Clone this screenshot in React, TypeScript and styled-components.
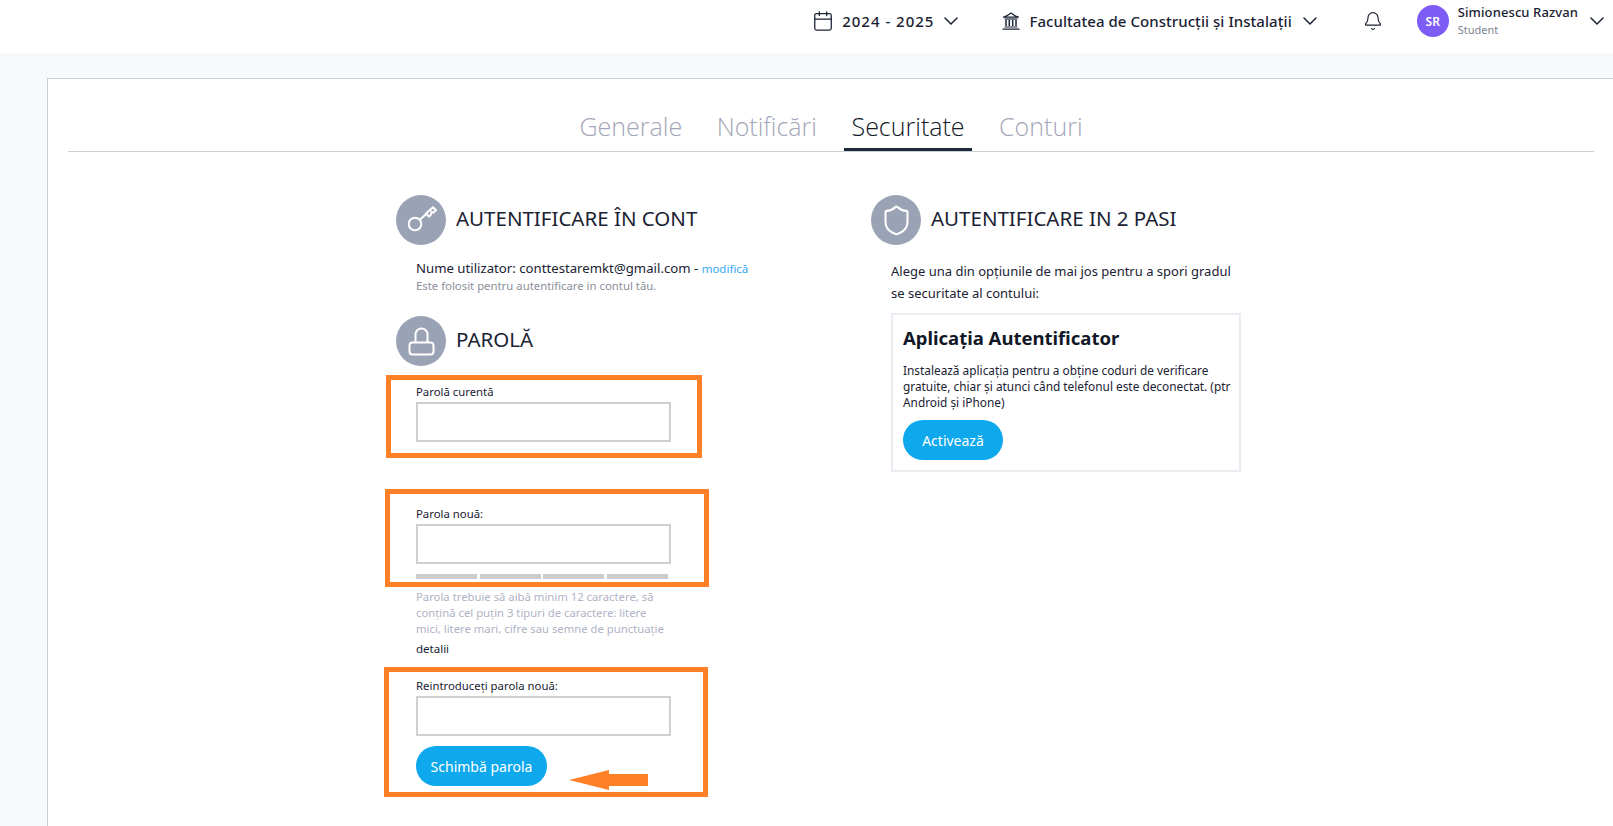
import React, { FunctionComponent } from 'react';
import styled, { createGlobalStyle } from 'styled-components';
import { Bell, Calendar, ChevronDown, Shield } from 'lucide-react';

const GlobalStyle = createGlobalStyle`
    html, body {
        margin: 0;
        padding: 0;
        background: #f8f9fb;
        font-family: "Noto Sans", "Open Sans", sans-serif;
        color: #1a2233;
    }
    * {
        box-sizing: border-box;
    }
`;

const Page = styled.div`
    height: 826px;
    overflow: hidden;
    display: flex;
    flex-direction: column;
`;

const Header = styled.header`
    height: 53px;
    flex-shrink: 0;
    background: #fff;
    display: flex;
    align-items: center;
    justify-content: flex-end;
    padding: 0 4px 11px 0;
`;

const HeaderItem = styled.div<{ $gap?: number; $spacing?: number; $textGap?: number }>`
    display: flex;
    align-items: center;
    gap: ${p => p.$textGap ?? 8}px;
    font-size: 15px;
    font-weight: 500;
    letter-spacing: ${p => p.$spacing ?? 0}px;
    color: #1a2233;
    margin-right: ${p => p.$gap ?? 0}px;
    white-space: nowrap;
`;

const ChevronGap = styled.span`
    display: flex;
    margin-left: -3px;
`;

const Avatar = styled.div`
    width: 32px;
    height: 32px;
    border-radius: 50%;
    background: #7c5cf5;
    color: #fff;
    font-size: 12px;
    font-weight: 600;
    display: flex;
    align-items: center;
    justify-content: center;
    margin-right: 9px;
`;

const UserBlock = styled.div`
    margin-right: 7px;
`;

const UserName = styled.div`
    font-size: 13px;
    font-weight: 500;
    letter-spacing: 0.1px;
    line-height: 18px;
`;

const UserRole = styled.div`
    font-size: 11px;
    line-height: 18px;
    color: #7d8494;
`;

const Panel = styled.main`
    flex: 1;
    margin: 25px 0 0 47px;
    background: #fff;
    border-top: 1px solid #ccced6;
    border-left: 1px solid #ccced6;
    padding: 0 19px 0 20px;
`;

const Tabs = styled.nav`
    height: 73px;
    border-bottom: 1px solid #ccced6;
    display: flex;
    justify-content: center;
    align-items: flex-end;
    gap: 19.5px;
    font-family: "Open Sans", sans-serif;
`;

const Tab = styled.div<{ $active?: boolean }>`
    height: 36px;
    padding: 0 7.5px;
    font-size: 25px;
    font-weight: 300;
    line-height: 22px;
    color: ${p => (p.$active ? '#111827' : '#a3a6b8')};
    border-bottom: 3px solid ${p => (p.$active ? '#1e293b' : 'transparent')};
`;

const Columns = styled.div`
    display: flex;
    padding: 43px 0 0 328px;
`;

const LeftColumn = styled.section`
    width: 475px;
`;

const RightColumn = styled.section`
    width: 372px;
`;

const SectionHead = styled.div<{ $top?: number }>`
    display: flex;
    align-items: center;
    gap: 10px;
    height: 50px;
    margin-top: ${p => p.$top ?? 0}px;
`;

const IconCircle = styled.div`
    width: 50px;
    height: 50px;
    border-radius: 50%;
    background: #9aa3b5;
    display: flex;
    align-items: center;
    justify-content: center;
    color: #fff;
`;

const SectionTitle = styled.h2`
    margin: 0;
    padding-bottom: 4px;
    font-size: 20.5px;
    font-weight: 400;
    color: #1a2233;
`;

const Indented = styled.div<{ $top?: number }>`
    margin: ${p => p.$top ?? 0}px 0 0 20px;
`;

const UserLine = styled.div`
    font-size: 13.2px;
    line-height: 20px;
`;

const ModifyLink = styled.span`
    font-size: 11.5px;
    line-height: 1;
    color: #36a9ee;
`;

const Muted = styled.div`
    font-size: 11.35px;
    line-height: 16px;
    color: #8b8f9a;
`;

const Field = styled.div<{ $top?: number }>`
    position: relative;
    width: 255px;
    margin-top: ${p => p.$top ?? 0}px;
`;

const Label = styled.label`
    display: block;
    height: 18px;
    font-size: 11.35px;
    line-height: 16px;
`;

const Input = styled.input`
    display: block;
    width: 255px;
    height: 40px;
    border: 2px solid #cfcfcf;
    background: #fff;
    outline: none;
`;

const StrengthBars = styled.div`
    display: flex;
    gap: 2.4px;
    margin-top: 10px;
    width: 252px;
`;

const StrengthBar = styled.div`
    flex: 1;
    height: 5px;
    background: #ccc;
`;

const HelpText = styled.p`
    width: 252px;
    margin: 10px 0 0;
    font-size: 11.3px;
    line-height: 16px;
    color: #b0b3c6;
`;

const DetailsLink = styled.div`
    margin-top: 4px;
    font-size: 11.5px;
    line-height: 16px;
`;

const PrimaryButton = styled.button<{ $width: number; $top?: number }>`
    display: block;
    width: ${p => p.$width}px;
    height: 40px;
    margin-top: ${p => p.$top ?? 0}px;
    border: none;
    border-radius: 20px;
    background: #0ea8ed;
    color: #fff;
    font-family: inherit;
    font-size: 14px;
    font-weight: 400;
`;

const Highlight = styled.div<{ $top: number; $left: number; $width: number; $height: number }>`
    position: absolute;
    top: ${p => p.$top}px;
    left: ${p => p.$left}px;
    width: ${p => p.$width}px;
    height: ${p => p.$height}px;
    border: 5px solid #ff8027;
    pointer-events: none;
`;

const ArrowMark = styled.svg`
    position: absolute;
    left: 153px;
    top: 92px;
`;

const Intro = styled.p`
    margin: 15px 0 0 20px;
    font-size: 13px;
    line-height: 22px;
    width: 350px;
`;

const Card = styled.div`
    width: 350px;
    height: 159px;
    margin: 9px 0 0 20px;
    border: 2px solid #ebebf2;
    padding: 10px 4px 10px 10px;
`;

const CardTitle = styled.h3`
    margin: 0;
    font-size: 18.5px;
    line-height: 26px;
    font-weight: 700;
    color: #111827;
`;

const CardText = styled.p`
    margin: 10.5px 0 10.5px;
    font-size: 11.85px;
    line-height: 16px;
`;

const KeyIcon: FunctionComponent = () => (
    <svg width="32" height="32" viewBox="0 0 32 32" fill="none" stroke="currentColor" strokeWidth="2">
        <circle cx="10" cy="20" r="6.3" />
        <path d="M14.7 15.8 L21 10.2" />
        <path d="M21 9.5 L28 3.2 L31 6.2 L28.2 8.8 L26.6 7.6 L25.8 10.8 L24 12.6 Z" strokeLinejoin="round" />
    </svg>
);

const LockIcon: FunctionComponent = () => (
    <svg width="30" height="32" viewBox="0 0 30 32" fill="none" stroke="currentColor" strokeWidth="2">
        <rect x="3.5" y="17.5" width="24" height="12" rx="3" />
        <path d="M9.5 17.5 V9.5 a6 6 0 0 1 12 0 V17.5" />
    </svg>
);

const BankIcon: FunctionComponent = () => (
    <svg width="18" height="18" viewBox="0 0 18 18" fill="none" stroke="currentColor" strokeWidth="1.2">
        <path d="M1.5 5.2 C4 4.6 6.5 3 9 1 C11.5 3 14 4.6 16.5 5.2 Z" strokeLinejoin="round" />
        <path d="M2.5 7 H15.5" />
        <path d="M4 8 V14 M7.3 8 V14 M10.7 8 V14 M14 8 V14" strokeWidth="1.5" />
        <path d="M2.5 15 H15.5 M0.5 17.2 H17.5" />
    </svg>
);

const tabs = ['Generale', 'Notificări', 'Securitate', 'Conturi'];

const App: FunctionComponent = () => (
    <Page>
        <GlobalStyle />
        <Header>
            <HeaderItem $gap={39} $spacing={1}>
                <Calendar size={22} strokeWidth={1.4} />
                <span>2024 - 2025</span>
                <ChevronGap><ChevronDown size={24} strokeWidth={1.5} /></ChevronGap>
            </HeaderItem>
            <HeaderItem $gap={41} $textGap={9} $spacing={0.05}>
                <BankIcon />
                <span>Facultatea de Construcții și Instalații</span>
                <ChevronGap><ChevronDown size={24} strokeWidth={1.5} /></ChevronGap>
            </HeaderItem>
            <HeaderItem $gap={34}>
                <Bell size={20} strokeWidth={1.4} />
            </HeaderItem>
            <Avatar>SR</Avatar>
            <UserBlock>
                <UserName>Simionescu Razvan</UserName>
                <UserRole>Student</UserRole>
            </UserBlock>
            <ChevronDown size={24} strokeWidth={1.5} />
        </Header>
        <Panel>
            <Tabs>
                {tabs.map(tab => (
                    <Tab key={tab} $active={tab === 'Securitate'}>{tab}</Tab>
                ))}
            </Tabs>
            <Columns>
                <LeftColumn>
                    <SectionHead>
                        <IconCircle><KeyIcon /></IconCircle>
                        <SectionTitle>AUTENTIFICARE ÎN CONT</SectionTitle>
                    </SectionHead>
                    <Indented $top={13}>
                        <UserLine>Nume utilizator: conttestaremkt@gmail.com - <ModifyLink>modifică</ModifyLink></UserLine>
                        <Muted>Este folosit pentru autentificare in contul tău.</Muted>
                    </Indented>
                    <SectionHead $top={22}>
                        <IconCircle><LockIcon /></IconCircle>
                        <SectionTitle>PAROLĂ</SectionTitle>
                    </SectionHead>
                    <Indented>
                        <Field $top={18}>
                            <Label>Parolă curentă</Label>
                            <Input type="password" />
                            <Highlight $top={-9} $left={-30} $width={316} $height={83} />
                        </Field>
                        <Field $top={64}>
                            <Label>Parola nouă:</Label>
                            <Input type="password" />
                            <StrengthBars>
                                <StrengthBar />
                                <StrengthBar />
                                <StrengthBar />
                                <StrengthBar />
                            </StrengthBars>
                            <Highlight $top={-17} $left={-31} $width={324} $height={98} />
                            <HelpText>Parola trebuie să aibă minim 12 caractere, să conțină cel puțin 3 tipuri de caractere: litere mici, litere mari, cifre sau semne de punctuație</HelpText>
                            <DetailsLink>detalii</DetailsLink>
                        </Field>
                        <Field $top={21}>
                            <Label>Reintroduceți parola nouă:</Label>
                            <Input type="password" />
                            <PrimaryButton $width={131} $top={10}>Schimbă parola</PrimaryButton>
                            <Highlight $top={-11} $left={-32} $width={324} $height={130} />
                            <ArrowMark width="79" height="20" viewBox="0 0 79 20">
                                <path d="M0 10 L40 0 L40 4 L79 4 L79 16 L40 16 L40 20 Z" fill="#ff8027" />
                            </ArrowMark>
                        </Field>
                    </Indented>
                </LeftColumn>
                <RightColumn>
                    <SectionHead>
                        <IconCircle><Shield size={33} strokeWidth={1.5} /></IconCircle>
                        <SectionTitle>AUTENTIFICARE IN 2 PASI</SectionTitle>
                    </SectionHead>
                    <Intro>Alege una din opțiunile de mai jos pentru a spori gradul se securitate al contului:</Intro>
                    <Card>
                        <CardTitle>Aplicația Autentificator</CardTitle>
                        <CardText>Instalează aplicația pentru a obține coduri de verificare gratuite, chiar și atunci când telefonul este deconectat. (ptr Android și iPhone)</CardText>
                        <PrimaryButton $width={100}>Activează</PrimaryButton>
                    </Card>
                </RightColumn>
            </Columns>
        </Panel>
    </Page>
);

export default App;
